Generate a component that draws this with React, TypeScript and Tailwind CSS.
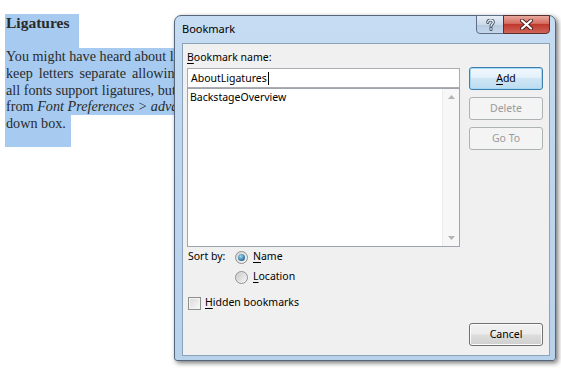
import React from 'react';

const ui = "font-['Noto_Sans',sans-serif]";
const serif = "font-['Liberation_Serif','Times_New_Roman',serif]";

// access key: first letter underlined, kept as one text node
const acc = 'inline-block first-letter:underline first-letter:underline-offset-[2px]';

const WinButton: React.FC<{ children: React.ReactNode; disabled?: boolean; primary?: boolean; className?: string }> = ({
  children,
  disabled = false,
  primary = false,
  className = '',
}) => {
  const base = 'h-[23px] w-full rounded-[3px] border text-[10.5px] leading-none flex items-center justify-center';
  if (disabled) {
    return <div className={`${base} border-[#adb2b5] bg-[#f4f4f4] text-[#9a9a9a] ${className}`}>{children}</div>;
  }
  if (primary) {
    return (
      <div
        className={`${base} border-[#3c7fb1] bg-[linear-gradient(#f1f8fd_0%,#e3f1fb_45%,#cfe6f5_50%,#bcdcf0_100%)] text-black shadow-[inset_0_0_0_1px_#a6d8f3] ${className}`}
      >
        {children}
      </div>
    );
  }
  return (
    <div
      className={`${base} border-[#707070] bg-[linear-gradient(#f2f2f2_0%,#ebebeb_48%,#dddddd_52%,#cfcfcf_100%)] text-black shadow-[inset_0_0_0_1px_#fcfcfc] ${className}`}
    >
      {children}
    </div>
  );
};

const Radio: React.FC<{ checked?: boolean }> = ({ checked = false }) => (
  <div className="w-[13px] h-[13px] rounded-full border border-[#8e8f8f] bg-[linear-gradient(135deg,#d4d4d4,#f8f8f8)] flex items-center justify-center">
    {checked ? (
      <div className="w-[7px] h-[7px] rounded-full bg-[radial-gradient(circle_at_40%_35%,#9edbf6,#2a6a99_70%,#1c4a70)]" />
    ) : (
      <div className="w-[9px] h-[9px] rounded-full bg-[linear-gradient(135deg,#cbcbcb,#f4f4f4)]" />
    )}
  </div>
);

const Bookmark: React.FC = () => (
  <div className="absolute left-[174px] top-[15px] w-[382px] h-[346px] rounded-t-[7px] rounded-b-[3px] border border-[#55667a] bg-[linear-gradient(#c6dcf2,#bed6ee_40%,#b9d2ec)] shadow-[2px_2px_5px_rgba(0,0,0,0.55)] flex flex-col pl-[7px] pr-[5px] pb-[4px]">
    {/* title bar */}
    <div className="h-[27px] flex items-start">
      <div className="flex-1 h-full flex items-center text-[11px] text-black">Bookmark</div>
      <div className="flex mt-[-1px]">
        <div className="w-[28px] h-[19px] rounded-bl-[4px] border border-[#5c6f86] bg-[linear-gradient(#e6eef7,#cbd9e9_50%,#b5c9df_51%,#c6d7ea)] flex items-center justify-center">
          <svg width="9" height="12" viewBox="0 0 9 12">
            <path
              d="M1.8 3.6 C1.8 1.8 3 1 4.5 1 C6.2 1 7.3 2 7.3 3.3 C7.3 5 5 5.2 5 7.2 M5 9.3 L5 10.6"
              fill="none"
              stroke="#3b4a5c"
              strokeWidth="3"
              strokeLinecap="round"
            />
            <path
              d="M1.8 3.6 C1.8 1.8 3 1 4.5 1 C6.2 1 7.3 2 7.3 3.3 C7.3 5 5 5.2 5 7.2 M5 9.3 L5 10.6"
              fill="none"
              stroke="#f2f5f8"
              strokeWidth="1.3"
              strokeLinecap="round"
            />
          </svg>
        </div>
        <div className="w-[47px] h-[19px] ml-[-1px] rounded-br-[4px] border border-[#5a2e2a] bg-[linear-gradient(#e9a99f,#d46a5e_45%,#c0392e_50%,#d0655a)] flex items-center justify-center">
          <svg width="13" height="11" viewBox="0 0 13 11">
            <path d="M2 1.5 L11 9.5 M11 1.5 L2 9.5" stroke="#4a1e1a" strokeWidth="4" strokeLinecap="round" />
            <path d="M2 1.5 L11 9.5 M11 1.5 L2 9.5" stroke="#ffffff" strokeWidth="2.2" strokeLinecap="round" />
          </svg>
        </div>
      </div>
    </div>

    {/* client area */}
    <div className={`flex-1 border border-[#8ba2ba] bg-[#f0f0f0] flex pl-[4px] pr-[6px] pb-[9px] ${ui} text-[10.5px] text-black`}>
      <div className="w-[273px] flex flex-col pt-[6px]">
        <div className="leading-[15px]">
          <span className={acc}>Bookmark name:</span>
        </div>
        <div className="mt-[3px] h-[20px] border border-[#abadb3] bg-white flex items-center pl-[3px] leading-none">
          <span>AboutLigatures</span>
          <span className="inline-block w-px h-[13px] bg-black ml-[1px]" />
        </div>
        <div className="h-[159px] border border-[#a0a4ab] bg-white flex">
          <div className="flex-1 pl-[2px] pt-[1px] leading-[15px]">BackstageOverview</div>
          <div className="w-[17px] bg-[#f7f7f7] border-l border-[#ececec] flex flex-col items-center justify-between py-[6px]">
            <svg width="7" height="4" viewBox="0 0 7 4">
              <path d="M0 4 L3.5 0 L7 4 Z" fill="#b4b4b4" />
            </svg>
            <svg width="7" height="4" viewBox="0 0 7 4">
              <path d="M0 0 L3.5 4 L7 0 Z" fill="#b4b4b4" />
            </svg>
          </div>
        </div>
        <div className="h-[20px] flex items-center">
          <div className="w-[48px] pl-[1px]">Sort by:</div>
          <Radio checked />
          <span className={`ml-[5px] ${acc}`}>Name</span>
        </div>
        <div className="h-[20px] flex items-center pl-[48px]">
          <Radio />
          <span className={`ml-[5px] ${acc}`}>Location</span>
        </div>
        <div className="mt-[6px] h-[20px] flex items-center pl-[1px]">
          <div className="w-[13px] h-[13px] border border-[#8e8f8f] bg-[linear-gradient(135deg,#d8d8d8,#fafafa)] shadow-[inset_0_0_0_1px_#f4f4f4]" />
          <span className={`ml-[4px] ${acc}`}>Hidden bookmarks</span>
        </div>
      </div>
      <div className="w-[74px] ml-[9px] flex flex-col pt-[23px]">
        <WinButton primary>
          <span className={acc}>Add</span>
        </WinButton>
        <WinButton disabled className="mt-[7px]">
          Delete
        </WinButton>
        <WinButton disabled className="mt-[7px]">
          Go To
        </WinButton>
        <WinButton className="mt-auto">Cancel</WinButton>
      </div>
    </div>
  </div>
);

// the paragraph runs on under the dialog; only the part left of it shows
const lines = [
  { text: 'You might have heard about ligatures,', cls: '' },
  { text: 'keep letters separate allowing', cls: '[word-spacing:2.5px]' },
  { text: 'all fonts support ligatures, but', cls: '' },
];

export default function App() {
  const hl = 'bg-[#a6caf0]';
  return (
    <div className="relative w-[561px] h-[370px] bg-white overflow-hidden">
      <div className={`pl-[5px] pt-[14px] ${serif} text-[14.2px] text-[#2a2a2a]`}>
        <div className={`w-[74px] h-[34px] ${hl} pl-[1px]`}>
          <div className="text-[15.5px] font-bold leading-[18px]">Ligatures</div>
        </div>
        <div className={`w-[460px] ${hl} pl-[1px] leading-[16.75px]`}>
          {lines.map((l) => (
            <div key={l.text} className={`w-[168px] overflow-hidden whitespace-nowrap ${l.cls}`}>
              {l.text}
            </div>
          ))}
          <div className="w-[168px] overflow-hidden whitespace-nowrap">
            from <i>Font Preferences &gt; advanced</i>
          </div>
        </div>
        <div className={`w-[66px] h-[32px] ${hl} pl-[1px] leading-[16.75px]`}>down box.</div>
      </div>
      <Bookmark />
    </div>
  );
}
